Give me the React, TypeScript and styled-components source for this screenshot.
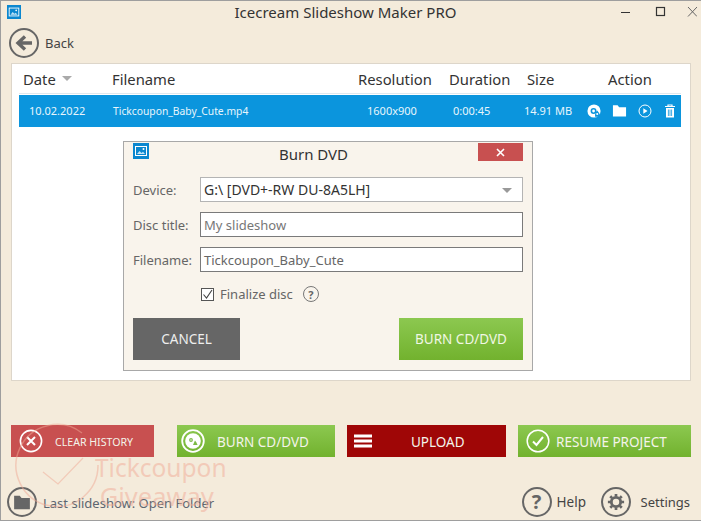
import React from 'react';
import styled, { createGlobalStyle } from 'styled-components';

const GlobalStyle = createGlobalStyle`
	html, body {
		margin: 0;
		padding: 0;
		background: #f4ebdb;
	}
	* {
		box-sizing: border-box;
	}
`;

const FONT = `'Noto Sans', 'Open Sans', sans-serif`;

const AppIcon = ({ size }: { size: number }) => (
	<svg width={size} height={size} viewBox="0 0 16 16">
		<rect width="16" height="16" fill="#0b87cf" />
		<rect x="2.5" y="3.5" width="11" height="9" fill="none" stroke="#fff" strokeWidth="1" />
		<path d="M4 11l2.5-3 2 2 1.5-1.2 2 2.2z" fill="#bfe3f7" />
		<circle cx="10.5" cy="6" r="1" fill="#fff" />
	</svg>
);

const DiscGlyph = ({ size, bg }: { size: number; bg: string }) => (
	<svg width={size} height={size} viewBox="0 0 16 16">
		<circle cx="8" cy="8" r="7.5" fill="#fff" />
		<circle cx="7.5" cy="8" r="3.4" fill={bg} />
		<circle cx="7.5" cy="8" r="1.6" fill="#fff" />
		<path d="M10 9.5l1.6-2 1.6 2 1.6 2.6v2.4h-5.6v-2.4z" fill={bg} />
		<circle cx="11.7" cy="11.5" r="1.2" fill="#fff" />
	</svg>
);

const FolderGlyph = ({ size, color }: { size: number; color: string }) => (
	<svg width={size} height={size} viewBox="0 0 16 16">
		<path d="M1 2.5h5l1.6 2H15v10H1z" fill={color} />
	</svg>
);

const WindowButtons = () => (
	<svg width="76" height="14" viewBox="0 0 76 14">
		<path d="M0 7.5h9" stroke="#333" strokeWidth="1" />
		<rect x="35.5" y="2.5" width="8" height="8" fill="none" stroke="#333" strokeWidth="1.2" />
		<path d="M67 2l9 9.5M76 2l-9 9.5" stroke="#666" strokeWidth="1" fill="none" />
	</svg>
);

const Watermark = () => (
	<WatermarkBox>
		<svg width="90" height="100" viewBox="0 0 90 100">
			<path d="M68 10A41 41 0 1 0 84 42" fill="none" stroke="currentColor" strokeWidth="1.5" />
			<path d="M29 49l15 12 25-26" fill="none" stroke="currentColor" strokeWidth="1.2" />
		</svg>
		<WatermarkText>
			<span>Tickcoupon</span>
			<WatermarkLine>Giveaway</WatermarkLine>
		</WatermarkText>
	</WatermarkBox>
);

const App = () => (
	<>
		<GlobalStyle />
		<Window>
			<TitleBar>
				<AppIcon size={14} />
				<TitleText>Icecream Slideshow Maker PRO</TitleText>
				<WindowButtons />
			</TitleBar>

			<BackRow>
				<RoundIcon>
					<svg width="20" height="20" viewBox="0 0 20 20">
						<path d="M18 10H6M11 3.5L4 10l7 6.5" fill="none" stroke="#666" strokeWidth="3.4" />
					</svg>
				</RoundIcon>
				<BackLabel>Back</BackLabel>
			</BackRow>

			<Panel>
				<HeaderRow>
					<HeaderCell>
						Date <SortArrow />
					</HeaderCell>
					<HeaderCell>Filename</HeaderCell>
					<HeaderCell>Resolution</HeaderCell>
					<HeaderCell>Duration</HeaderCell>
					<HeaderCell>Size</HeaderCell>
					<HeaderCell>Action</HeaderCell>
				</HeaderRow>
				<FileRow>
					<span>10.02.2022</span>
					<FileName>Tickcoupon_Baby_Cute.mp4</FileName>
					<span>1600x900</span>
					<span>0:00:45</span>
					<span>14.91 MB</span>
					<ActionIcons>
						<DiscGlyph size={14} bg="#0b95dd" />
						<FolderGlyph size={15} color="#fff" />
						<svg width="14" height="14" viewBox="0 0 14 14">
							<circle cx="7" cy="7" r="6" fill="none" stroke="#fff" strokeWidth="1" />
							<path d="M5.3 4.2l4.2 2.8-4.2 2.8z" fill="#fff" />
						</svg>
						<svg width="14" height="14" viewBox="0 0 14 14">
							<path d="M2 2.5h10M5 2.5V1h4v1.5" fill="none" stroke="#fff" strokeWidth="1.2" />
							<path d="M3 4h8v9.5H3z" fill="#fff" />
							<path d="M5.4 5.5v6.5M7 5.5v6.5M8.6 5.5v6.5" stroke="#0b95dd" strokeWidth="0.8" />
						</svg>
					</ActionIcons>
				</FileRow>
			</Panel>

			<Dialog>
				<DialogTitleBar>
					<AppIcon size={16} />
					<DialogTitle>Burn DVD</DialogTitle>
					<CloseButton>
						<svg width="9" height="9" viewBox="0 0 9 9">
							<path d="M1 1l7 7M8 1l-7 7" stroke="#fff" strokeWidth="1.6" />
						</svg>
					</CloseButton>
				</DialogTitleBar>
				<FormGrid>
					<FieldLabel>Device:</FieldLabel>
					<Field $device>
						G:\ [DVD+-RW DU-8A5LH]
						<SelectArrow />
					</Field>
					<FieldLabel>Disc title:</FieldLabel>
					<Field $placeholder>My slideshow</Field>
					<FieldLabel>Filename:</FieldLabel>
					<Field>Tickcoupon_Baby_Cute</Field>
				</FormGrid>
				<CheckRow>
					<CheckBox>
						<svg width="11" height="11" viewBox="0 0 11 11">
							<path d="M1.5 5.5l3 3.5 5.5-8" fill="none" stroke="#444" strokeWidth="1.1" />
						</svg>
					</CheckBox>
					<CheckLabel>Finalize disc</CheckLabel>
					<SmallHelp>?</SmallHelp>
				</CheckRow>
				<DialogButtons>
					<CancelButton>CANCEL</CancelButton>
					<BurnButton>BURN CD/DVD</BurnButton>
				</DialogButtons>
			</Dialog>

			<Watermark />

			<ActionBar>
				<ActionButton $width={143} $pad={8} $bg="#c85050">
					<svg width="24" height="24" viewBox="0 0 24 24">
						<circle cx="12" cy="12" r="10.6" fill="none" stroke="#fff" strokeWidth="1.6" />
						<path d="M8 8l8 8M16 8l-8 8" stroke="#fff" strokeWidth="2" />
					</svg>
					<ButtonLabel $small $offset={12}>CLEAR HISTORY</ButtonLabel>
				</ActionButton>
				<ActionButton $width={158} $gap={23} $pad={4} $green>
					<svg width="24" height="24" viewBox="0 0 24 24">
						<circle cx="12" cy="12" r="10.8" fill="none" stroke="#fff" strokeWidth="1.8" />
						<circle cx="12" cy="12" r="7.8" fill="#fff" />
						<circle cx="10" cy="11" r="1.9" fill="#7cb944" />
						<circle cx="10" cy="11" r="0.7" fill="#fff" />
						<path d="M14 11.5l1.4 2 1.2 2.5h-4.6z" fill="#7cb944" />
					</svg>
					<ButtonLabel $offset={12}>BURN CD/DVD</ButtonLabel>
				</ActionButton>
				<ActionButton $width={159} $gap={12} $pad={7} $bg="#9f0606">
					<svg width="18" height="14" viewBox="0 0 18 14">
						<path d="M0 2h18M0 7h18M0 12h18" stroke="#fff" strokeWidth="3" />
					</svg>
					<ButtonLabel $offset={39}>UPLOAD</ButtonLabel>
				</ActionButton>
				<ActionButton $width={173} $gap={12} $pad={8} $green>
					<svg width="24" height="24" viewBox="0 0 24 24">
						<circle cx="12" cy="12" r="10.8" fill="none" stroke="#fff" strokeWidth="1.5" />
						<path d="M7 12.5l3.5 3.5 6.5-8" fill="none" stroke="#fff" strokeWidth="2" />
					</svg>
					<ButtonLabel $offset={6}>RESUME PROJECT</ButtonLabel>
				</ActionButton>
			</ActionBar>

			<Footer>
				<FooterGroup>
					<RoundIcon>
						<FolderGlyph size={18} color="#666" />
					</RoundIcon>
					<LastSlideshow>Last slideshow: Open Folder</LastSlideshow>
				</FooterGroup>
				<FooterRight>
					<RoundIcon>
						<HelpMark>?</HelpMark>
					</RoundIcon>
					<FooterLink $width={44}>Help</FooterLink>
					<RoundIcon>
						<svg width="18" height="18" viewBox="0 0 20 20">
							<circle cx="10" cy="10" r="5.2" fill="none" stroke="#666" strokeWidth="3.2" />
							<path
								d="M10 1v3M10 16v3M1 10h3M16 10h3M3.6 3.6l2.1 2.1M14.3 14.3l2.1 2.1M3.6 16.4l2.1-2.1M14.3 5.7l2.1-2.1"
								stroke="#666"
								strokeWidth="3"
							/>
						</svg>
					</RoundIcon>
					<SettingsLink>Settings</SettingsLink>
				</FooterRight>
			</Footer>
		</Window>
	</>
);

const Window = styled.div`
	position: relative;
	width: 701px;
	height: 521px;
	overflow: hidden;
	display: flex;
	flex-direction: column;
	background: #f4ebdb;
	border-top: 1px solid #9e9e9e;
	border-bottom: 1px solid #9e9e9e;
	border-left: 1px solid #9e9e9e;
	font-family: ${FONT};
	color: #333;
`;

const TitleBar = styled.div`
	display: flex;
	align-items: center;
	height: 25px;
	padding: 0 4px 4px 6px;
	position: relative;
	z-index: 1;
`;

const TitleText = styled.div`
	flex: 1;
	text-align: center;
	font-size: 15px;
	color: #333;
	padding-left: 49px;
`;

const BackRow = styled.div`
	display: flex;
	align-items: center;
	gap: 6px;
	height: 36px;
	padding: 0 0 2px 8px;
`;

const RoundIcon = styled.div`
	width: 30px;
	height: 30px;
	flex: none;
	display: flex;
	align-items: center;
	justify-content: center;
	border: 2px solid #666;
	border-radius: 50%;
`;

const BackLabel = styled.span`
	font-size: 13px;
	color: #444;
`;

const Panel = styled.div`
	margin: 1px 10px 0;
	height: 318px;
	background: #fff;
	border: 1px solid #ddd6ca;
	padding: 0 9px 0 7px;
`;

const HeaderRow = styled.div`
	display: grid;
	grid-template-columns: 89px 246px 91px 78px 81px auto;
	align-items: center;
	height: 30px;
	padding-left: 4px;
	border-bottom: 1px solid #dfe8ee;
`;

const HeaderCell = styled.div`
	display: flex;
	align-items: center;
	gap: 6px;
	font-size: 14.8px;
	color: #333;
`;

const SortArrow = styled.span`
	width: 0;
	height: 0;
	border-left: 5px solid transparent;
	border-right: 5px solid transparent;
	border-top: 5px solid #aaa;
`;

const FileRow = styled.div`
	display: grid;
	grid-template-columns: 84px 254px 86px 71px 63px auto;
	align-items: center;
	height: 32px;
	margin-top: 1px;
	padding: 0 0 1px 10px;
	background: #0b95dd;
	color: #e8f5fc;
	font-size: 11px;
`;

const FileName = styled.span`
	font-size: 10.3px;
`;

const ActionIcons = styled.div`
	display: flex;
	align-items: center;
	gap: 11px;
`;

const Dialog = styled.div`
	position: absolute;
	left: 122px;
	top: 140px;
	width: 410px;
	height: 230px;
	background: #f9f4ec;
	border: 1px solid #a8a8a8;
	padding: 1px 9px 0 9px;
	z-index: 2;
`;

const DialogTitleBar = styled.div`
	display: flex;
	align-items: flex-start;
	height: 34px;
`;

const DialogTitle = styled.div`
	flex: 1;
	text-align: center;
	font-size: 15px;
	line-height: 22px;
	color: #333;
`;

const CloseButton = styled.div`
	width: 45px;
	height: 18px;
	background: #c85050;
	display: flex;
	align-items: center;
	justify-content: center;
`;

const FormGrid = styled.div`
	display: grid;
	grid-template-columns: 67px 1fr;
	grid-auto-rows: 25px;
	row-gap: 10px;
	align-items: center;
`;

const FieldLabel = styled.label`
	font-size: 13px;
	color: #666;
`;

const Field = styled.div<{ $device?: boolean; $placeholder?: boolean }>`
	position: relative;
	height: 25px;
	display: flex;
	align-items: center;
	padding-left: 3px;
	background: #fff;
	border: 1px solid ${(p) => (p.$device ? '#b4b4b4' : '#7a7a7a')};
	font-size: ${(p) => (p.$device ? '14px' : '13px')};
	color: ${(p) => (p.$device ? '#333' : p.$placeholder ? '#777' : '#666')};
`;

const SelectArrow = styled.span`
	position: absolute;
	right: 10px;
	top: 10px;
	width: 0;
	height: 0;
	border-left: 5px solid transparent;
	border-right: 5px solid transparent;
	border-top: 5px solid #999;
`;

const CheckRow = styled.div`
	display: flex;
	align-items: center;
	height: 16px;
	margin: 14px 0 0 68px;
`;

const CheckBox = styled.div`
	width: 13px;
	height: 13px;
	display: flex;
	align-items: center;
	justify-content: center;
	background: #fff;
	border: 1px solid #555;
`;

const CheckLabel = styled.span`
	margin-left: 6px;
	font-size: 13px;
	color: #666;
`;

const SmallHelp = styled.span`
	width: 16px;
	height: 16px;
	margin-left: 10px;
	display: flex;
	align-items: center;
	justify-content: center;
	border: 1.5px solid #777;
	border-radius: 50%;
	font-size: 11px;
	font-weight: 700;
	color: #666;
`;

const DialogButtons = styled.div`
	display: flex;
	justify-content: space-between;
	margin-top: 16px;
`;

const CancelButton = styled.div`
	width: 107px;
	height: 42px;
	display: flex;
	align-items: center;
	justify-content: center;
	background: #666;
	color: #eee;
	font-size: 13.5px;
`;

const BurnButton = styled(CancelButton)`
	width: 124px;
	background: linear-gradient(#8cc850, #72b22e);
	color: #f0f7e4;
`;

const ActionBar = styled.div`
	display: flex;
	margin-top: 44px;
	padding-left: 10px;
`;

const ActionButton = styled.div<{ $width: number; $gap?: number; $pad: number; $bg?: string; $green?: boolean }>`
	width: ${(p) => p.$width}px;
	height: 32px;
	margin-left: ${(p) => p.$gap ?? 0}px;
	display: flex;
	align-items: center;
	padding-left: ${(p) => p.$pad}px;
	background: ${(p) => (p.$green ? 'linear-gradient(#8cc850, #72b22e)' : p.$bg)};

	svg {
		flex: none;
	}
`;

const ButtonLabel = styled.span<{ $small?: boolean; $offset: number }>`
	margin: 2px 0 0 ${(p) => p.$offset}px;
	font-size: ${(p) => (p.$small ? '10.6px' : '13.5px')};
	color: #f4f4ea;
	white-space: nowrap;
`;

const Footer = styled.div`
	display: flex;
	align-items: center;
	justify-content: space-between;
	margin-top: 30px;
	padding: 0 11px 0 6px;
`;

const FooterGroup = styled.div`
	display: flex;
	align-items: center;
	gap: 6px;
`;

const FooterRight = styled.div`
	display: flex;
	align-items: center;
`;

const LastSlideshow = styled.span`
	position: relative;
	top: 1px;
	font-size: 13px;
	color: #5d6670;
`;

const HelpMark = styled.span`
	font-size: 20px;
	font-weight: 700;
	line-height: 1;
	color: #666;
`;

const FooterLink = styled.span<{ $width: number }>`
	width: ${(p) => p.$width}px;
	margin-left: 5px;
	font-size: 13.5px;
	color: #444;
`;

const SettingsLink = styled.span`
	margin-left: 10px;
	font-size: 13px;
	color: #444;
`;

const WatermarkBox = styled.div`
	position: absolute;
	left: 13px;
	top: 422px;
	display: flex;
	color: rgba(240, 170, 150, 0.5);
	pointer-events: none;
	z-index: 3;
`;

const WatermarkText = styled.div`
	display: flex;
	flex-direction: column;
	align-items: center;
	margin: 31px 0 0 -9px;
	font-size: 24.5px;
	line-height: 28px;
`;

const WatermarkLine = styled.span`
	margin-right: 8px;
	font-size: 25.5px;
`;

export default App;
